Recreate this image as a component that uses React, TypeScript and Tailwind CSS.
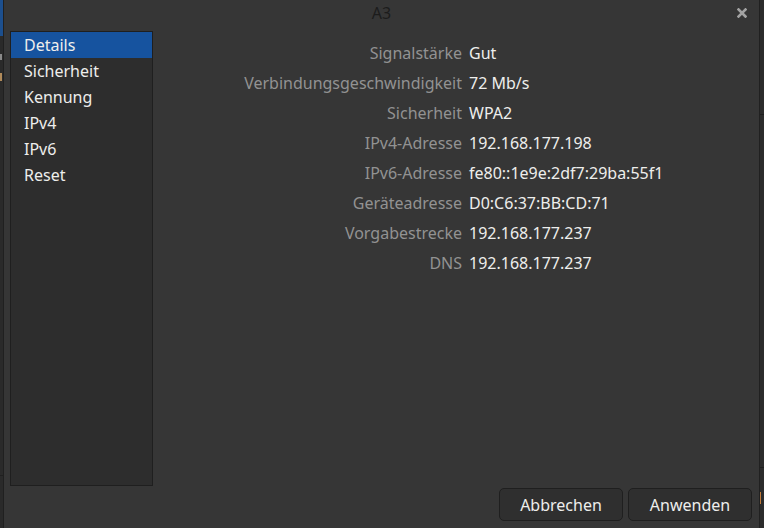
import React from "react";

const rows: [string, string][] = [
  ["Signalstärke", "Gut"],
  ["Verbindungsgeschwindigkeit", "72 Mb/s"],
  ["Sicherheit", "WPA2"],
  ["IPv4-Adresse", "192.168.177.198"],
  ["IPv6-Adresse", "fe80::1e9e:2df7:29ba:55f1"],
  ["Geräteadresse", "D0:C6:37:BB:CD:71"],
  ["Vorgabestrecke", "192.168.177.237"],
  ["DNS", "192.168.177.237"],
];

const items = ["Details", "Sicherheit", "Kennung", "IPv4", "IPv6", "Reset"];

export default function App() {
  return (
    <div
      className="w-[764px] h-[528px] flex overflow-hidden bg-[#2b2b2b] text-[16px]"
      style={{ fontFamily: '"Noto Sans", "Open Sans", sans-serif' }}
    >
      {/* left background window sliver */}
      <div className="w-[3px] flex flex-col shrink-0">
        <div className="h-[36px] bg-[#1c4f8e]" />
        <div className="flex-1 bg-[#2a2a2a] flex flex-col">
          <div className="h-[18px]" />
          <div className="h-[6px] w-[2px] bg-[#8a8a8a]" />
          <div className="h-[13px]" />
          <div className="h-[8px] w-[2px] bg-[#b08a5a]" />
          <div className="flex-1 border-b border-[#202020]" />
          <div className="h-[52px]" />
        </div>
      </div>

      {/* dialog */}
      <div className="flex-1 flex flex-col bg-[#363636] border-l border-[#202020] border-r">
        {/* header */}
        <div className="h-[31px] shrink-0 flex items-center relative">
          <div className="flex-1 text-center text-[#1c1c1c] pb-[6px]">A3</div>
          <div className="absolute right-[12px] top-[8px] w-[10px] h-[10px]">
            <svg viewBox="0 0 10 10" width="10" height="10">
              <path d="M1.5 1.5 L8.5 8.5 M8.5 1.5 L1.5 8.5" stroke="#a3a3a3" strokeWidth="2.6" strokeLinecap="square" />
            </svg>
          </div>
        </div>
        {/* body */}
        <div className="flex-1 flex">
          <div className="pl-[6px] shrink-0">
            <div className="w-[143px] h-[455px] bg-[#2d2d2d] border border-[#1f1f1f]">
              {items.map((it, i) => (
                <div
                  key={it}
                  className={
                    "h-[26px] flex items-center pl-[13px] text-[#eeeeec] " +
                    (i === 0 ? "bg-[#16539f]" : "")
                  }
                >
                  {it}
                </div>
              ))}
            </div>
          </div>
          <div className="flex-1 flex flex-col justify-between pb-[7px]">
            <div className="pt-[7px] grid grid-cols-[309px_auto] gap-x-[7px]">
              {rows.map(([l, v]) => (
                <React.Fragment key={l}>
                  <div className="h-[30px] flex items-center justify-end text-[#929292]">{l}</div>
                  <div className="h-[30px] flex items-center text-[#eeeeec]">{v}</div>
                </React.Fragment>
              ))}
            </div>
            <div className="flex justify-end gap-[5px] pr-[7px]">
              <button className="w-[124px] h-[33px] rounded-[5px] border border-[#1f1f1f] bg-[#2f2f2f] text-[#eeeeec]">
                Abbrechen
              </button>
              <button className="w-[124px] h-[33px] rounded-[5px] border border-[#1f1f1f] bg-[#2f2f2f] text-[#eeeeec]">
                Anwenden
              </button>
            </div>
          </div>
        </div>
      </div>

      {/* right background sliver */}
      <div className="w-[4px] shrink-0 flex flex-col bg-[#2c2c2c]">
        <div className="h-[115px] border-b border-[#1f1f1f]" />
        <div className="flex-1 border-b border-[#1f1f1f]" />
        <div className="h-[24px]" />
        <div className="h-[12px] w-[1px] bg-[#c07a3a]" />
        <div className="h-[24px]" />
      </div>
    </div>
  );
}
